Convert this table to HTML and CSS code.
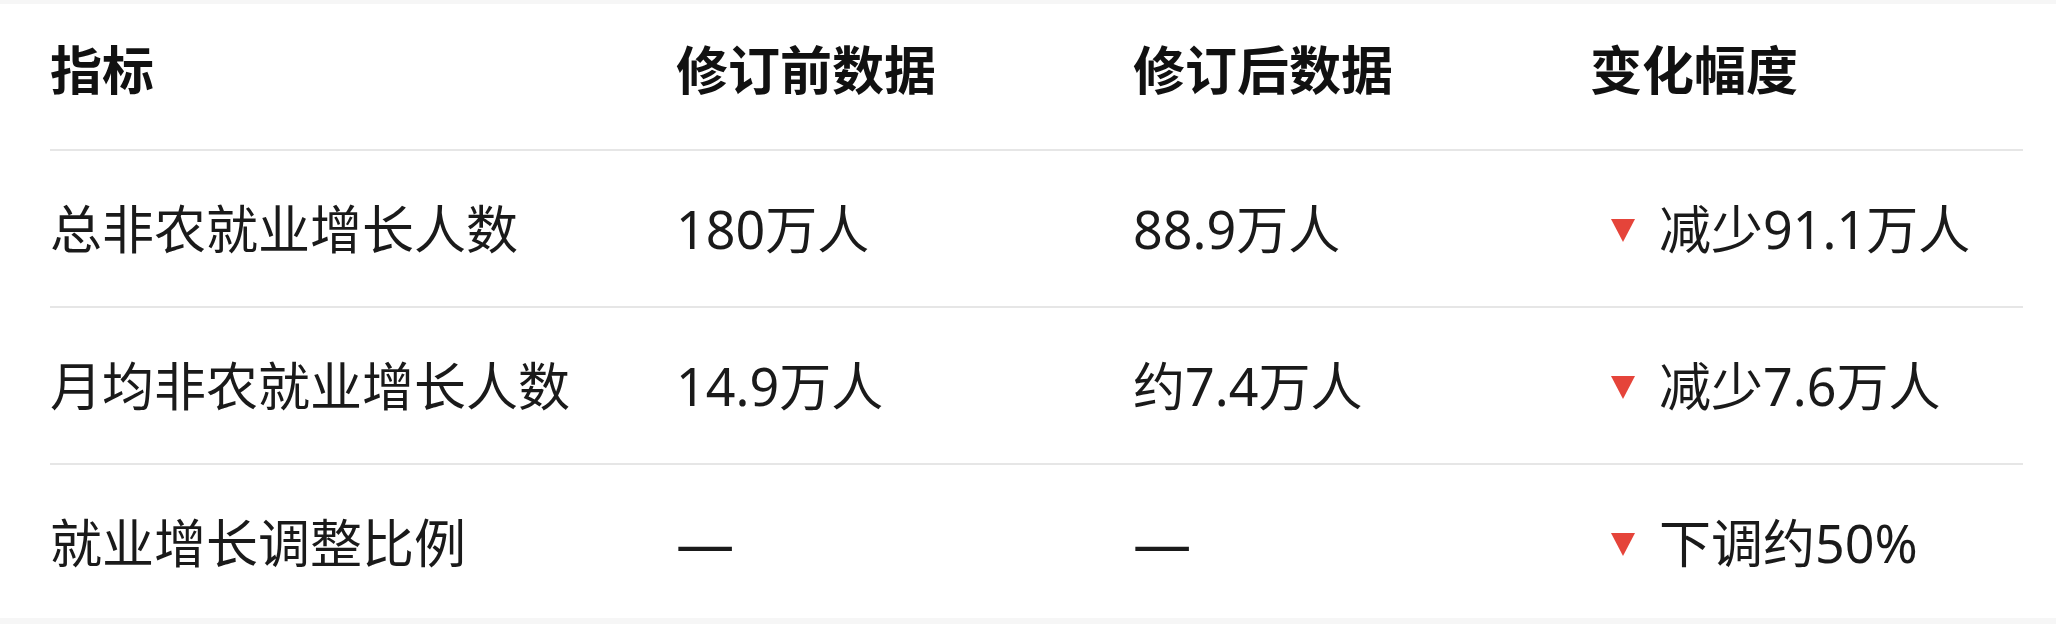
FILE: index.html
```html
<!DOCTYPE html>
<html lang="zh-CN">
<head>
<meta charset="utf-8">
<title>非农就业数据修订</title>
<link rel="stylesheet" href="styles.css">
</head>
<body>
<div class="card">
  <table class="data">
    <colgroup>
      <col class="c1"><col class="c2"><col class="c3"><col class="c4">
    </colgroup>
    <thead>
      <tr>
        <th>指标</th>
        <th>修订前数据</th>
        <th>修订后数据</th>
        <th>变化幅度</th>
      </tr>
    </thead>
    <tbody>
      <tr>
        <td>总非农就业增长人数</td>
        <td>180万人</td>
        <td>88.9万人</td>
        <td><span class="chg"><span class="down"></span>减少91.1万人</span></td>
      </tr>
      <tr>
        <td>月均非农就业增长人数</td>
        <td>14.9万人</td>
        <td>约7.4万人</td>
        <td><span class="chg"><span class="down"></span>减少7.6万人</span></td>
      </tr>
      <tr>
        <td>就业增长调整比例</td>
        <td><span class="dash">—</span></td>
        <td><span class="dash">—</span></td>
        <td><span class="chg"><span class="down"></span>下调约50%</span></td>
      </tr>
    </tbody>
  </table>
</div>
</body>
</html>
```
FILE: styles.css
```css
html, body {
  margin: 0;
  padding: 0;
}
body {
  background: #f6f6f6;
  padding-top: 4px;
  font-family: "Noto Sans", "Noto Sans CJK SC", sans-serif;
  color: #1a1a1a;
}
.card {
  background: #ffffff;
  height: 614px;
  padding: 0 33px 0 50px;
  box-sizing: border-box;
  overflow: hidden;
}
.data {
  width: 100%;
  border-collapse: collapse;
  table-layout: fixed;
}
.c1 { width: 626px; }
.c2 { width: 457px; }
.c3 { width: 457px; }
.c4 { width: auto; }
.data th,
.data td {
  text-align: left;
  font-size: 52px;
  line-height: 78px;
  padding: 0;
  white-space: nowrap;
}
.data th {
  font-weight: 700;
  color: #111111;
  padding-top: 27px;
  padding-bottom: 40px;
  border-bottom: 2px solid #e6e6e6;
}
.data td {
  font-weight: 400;
  height: 78px;
  padding-top: 39px;
  padding-bottom: 38px;
  border-bottom: 2px solid #e6e6e6;
}
.data tbody tr:last-child td {
  border-bottom: none;
}
.chg {
  display: inline-flex;
  align-items: center;
  height: 78px;
  vertical-align: top;
  padding-left: 21px;
}
.down {
  display: inline-block;
  width: 0;
  height: 0;
  border-left: 12.5px solid transparent;
  border-right: 12.5px solid transparent;
  border-top: 23px solid #e5443a;
  margin-right: 24px;
  margin-top: 2px;
}
.dash {
  display: inline-block;
  transform: scaleX(1.12);
  transform-origin: left center;
}
```
